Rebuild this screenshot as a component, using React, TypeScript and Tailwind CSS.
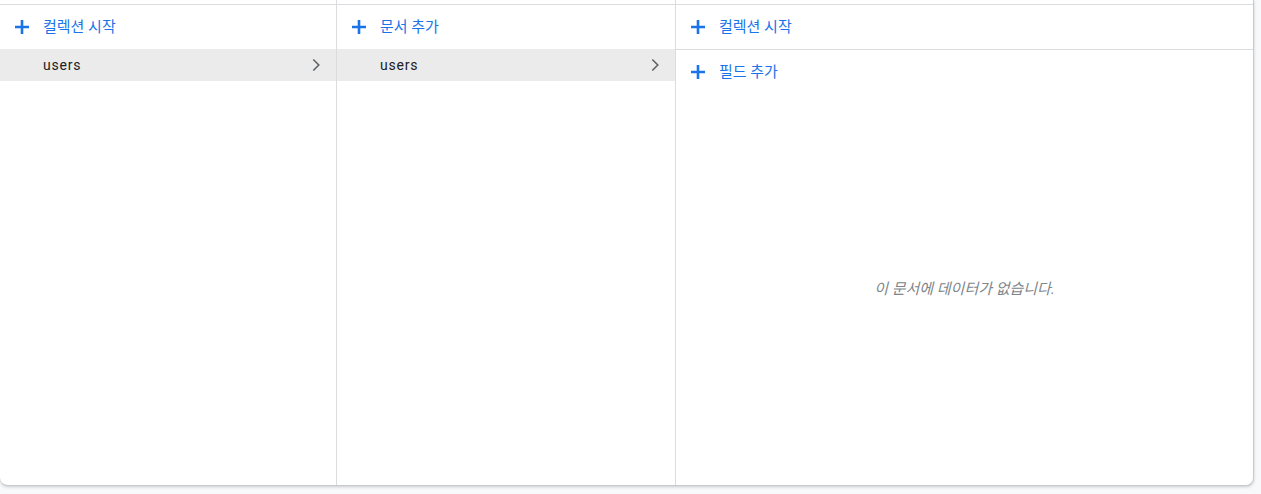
import React from "react";

const font = { fontFamily: 'Roboto, "Noto Sans CJK KR", sans-serif' };

function Plus() {
  return (
    <svg width="24" height="24" viewBox="0 0 24 24" className="shrink-0">
      <path d="M12 5v14M5 12h14" fill="none" stroke="#1a73e8" strokeWidth="2.6" />
    </svg>
  );
}

function Chevron() {
  return (
    <svg width="24" height="24" viewBox="0 0 24 24" className="shrink-0">
      <path d="M9.3 6.5L14.8 12l-5.5 5.5" fill="none" stroke="#5f6368" strokeWidth="1.6" />
    </svg>
  );
}

function AddRow({ label, border }: { label: string; border?: boolean }) {
  return (
    <div
      className={
        "flex items-center gap-[9px] px-[10px] text-[15px] text-[#1a73e8] " +
        (border ? "h-[45px] border-b border-[#dadce0]" : "h-[44px]")
      }
    >
      <Plus />
      <span>{label}</span>
    </div>
  );
}

function ItemRow({ label }: { label: string }) {
  return (
    <div className="flex h-[32px] items-center justify-between bg-[#ebebeb] pl-[43px] pr-[8px] text-[14px] tracking-[0.8px] text-[#202124]">
      <span>{label}</span>
      <Chevron />
    </div>
  );
}

export default function App() {
  return (
    <div className="h-[494px] w-full bg-[#f8f9fa]" style={font}>
      <div className="flex h-[486px] w-[1254px] overflow-hidden rounded-b-lg border-r border-b border-[#c8cacd] bg-white shadow-[0_1px_3px_rgba(60,64,67,0.25)]">
        <div className="flex w-[337px] shrink-0 flex-col border-r border-[#dadce0]">
          <div className="h-[5px] border-b border-[#dadce0]" />
          <AddRow label="컬렉션 시작" />
          <ItemRow label="users" />
        </div>
        <div className="flex w-[339px] shrink-0 flex-col border-r border-[#dadce0]">
          <div className="h-[5px] border-b border-[#dadce0]" />
          <AddRow label="문서 추가" />
          <ItemRow label="users" />
        </div>
        <div className="flex min-w-0 flex-1 flex-col">
          <div className="h-[5px] border-b border-[#dadce0]" />
          <AddRow label="컬렉션 시작" border />
          <AddRow label="필드 추가" />
          <div className="flex flex-1 items-center justify-center text-[15px] italic text-[#80868b]">
            이 문서에 데이터가 없습니다.
          </div>
        </div>
      </div>
    </div>
  );
}
